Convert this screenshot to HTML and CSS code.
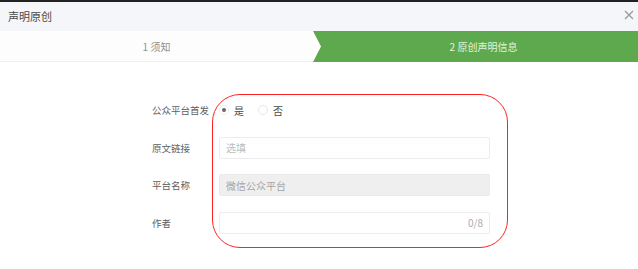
FILE: index.html
```html
<!DOCTYPE html>
<html lang="zh-CN">
<head>
    <meta charset="UTF-8">
    <title>声明原创</title>
    <link rel="stylesheet" href="styles.css">
</head>
<body>
    <div class="dialog">
        <div class="dialog-header">
            <h1>声明原创</h1>
            <svg class="close" width="10" height="10" viewBox="0 0 10 10">
                <path d="M1 1L9 9M9 1L1 9" stroke="#9a9a9a" stroke-width="1.3"/>
            </svg>
        </div>

        <div class="steps">
            <div class="step">1 须知</div>
            <div class="step active">2 原创声明信息</div>
        </div>

        <div class="form">
            <div class="row">
                <label>公众平台首发</label>
                <div class="radios">
                    <span class="radio checked"></span><span class="radio-text">是</span>
                    <span class="radio"></span><span class="radio-text">否</span>
                </div>
            </div>
            <div class="row">
                <label>原文链接</label>
                <div class="input"><span class="placeholder">选填</span></div>
            </div>
            <div class="row">
                <label>平台名称</label>
                <div class="input disabled">微信公众平台</div>
            </div>
            <div class="row">
                <label>作者</label>
                <div class="input"><span></span><span class="counter">0/8</span></div>
            </div>
            <div class="highlight"></div>
        </div>
    </div>
</body>
</html>
```

FILE: styles.css
```css
* {
    margin: 0;
    padding: 0;
    box-sizing: border-box;
}

body {
    background: #fff;
    font-family: "Noto Sans CJK SC", "Noto Sans", sans-serif;
    width: 638px;
    height: 269px;
    overflow: hidden;
}

.dialog-header {
    height: 31px;
    background: #f5f6f9;
    border-top: 2px solid #222;
    display: flex;
    align-items: center;
    justify-content: space-between;
    padding: 0 4px 0 8px;
}

.dialog-header h1 {
    font-size: 11px;
    font-weight: normal;
    color: #4a4a4a;
    margin-top: -2px;
}

.close {
    margin-top: -4px;
}

.steps {
    display: flex;
    height: 31px;
}

.step {
    width: 313px;
    display: flex;
    align-items: center;
    justify-content: center;
    font-size: 10px;
    color: #8f8f8f;
    background: #fdfdfd;
    border-bottom: 1px solid #f0f0f0;
}

.step.active {
    flex: 1;
    background: #5ea94d;
    color: #e4f3df;
    padding-left: 16px;
    border-bottom: none;
    clip-path: polygon(0 0, 100% 0, 100% 100%, 0 100%, 8px 50%);
}

.form {
    position: relative;
    padding: 37px 0 0 152px;
    display: flex;
    flex-direction: column;
    gap: 15.5px;
}

.row {
    display: flex;
    align-items: center;
    height: 22px;
}

.row label {
    width: 67px;
    font-size: 9.5px;
    color: #5e5e5e;
}

.radios {
    display: flex;
    align-items: center;
    font-size: 10px;
    color: #4a4a4a;
}

.radio {
    width: 10px;
    height: 10px;
    border: 1px solid #e6e6e6;
    border-radius: 50%;
    margin-right: 5px;
    position: relative;
}

.radio.checked {
    border-color: #f0f0f0;
}

.radio.checked::after {
    content: "";
    position: absolute;
    left: 2px;
    top: 2px;
    width: 4px;
    height: 4px;
    border-radius: 50%;
    background: #666;
}

.radio-text {
    margin-right: 14px;
}

.input {
    width: 271px;
    height: 22px;
    border: 1px solid #ececec;
    border-radius: 2px;
    display: flex;
    align-items: center;
    justify-content: space-between;
    padding: 0 6px;
    font-size: 10px;
    background: #fff;
}

.placeholder {
    color: #bbb;
}

.input.disabled {
    background: #efefef;
    border-color: #ebebeb;
    color: #a5a5a5;
}

.counter {
    color: #aaa;
}

.highlight {
    position: absolute;
    left: 212px;
    top: 32px;
    width: 296px;
    height: 154px;
    border: 1.5px solid #f22;
    border-radius: 28px;
}
```
